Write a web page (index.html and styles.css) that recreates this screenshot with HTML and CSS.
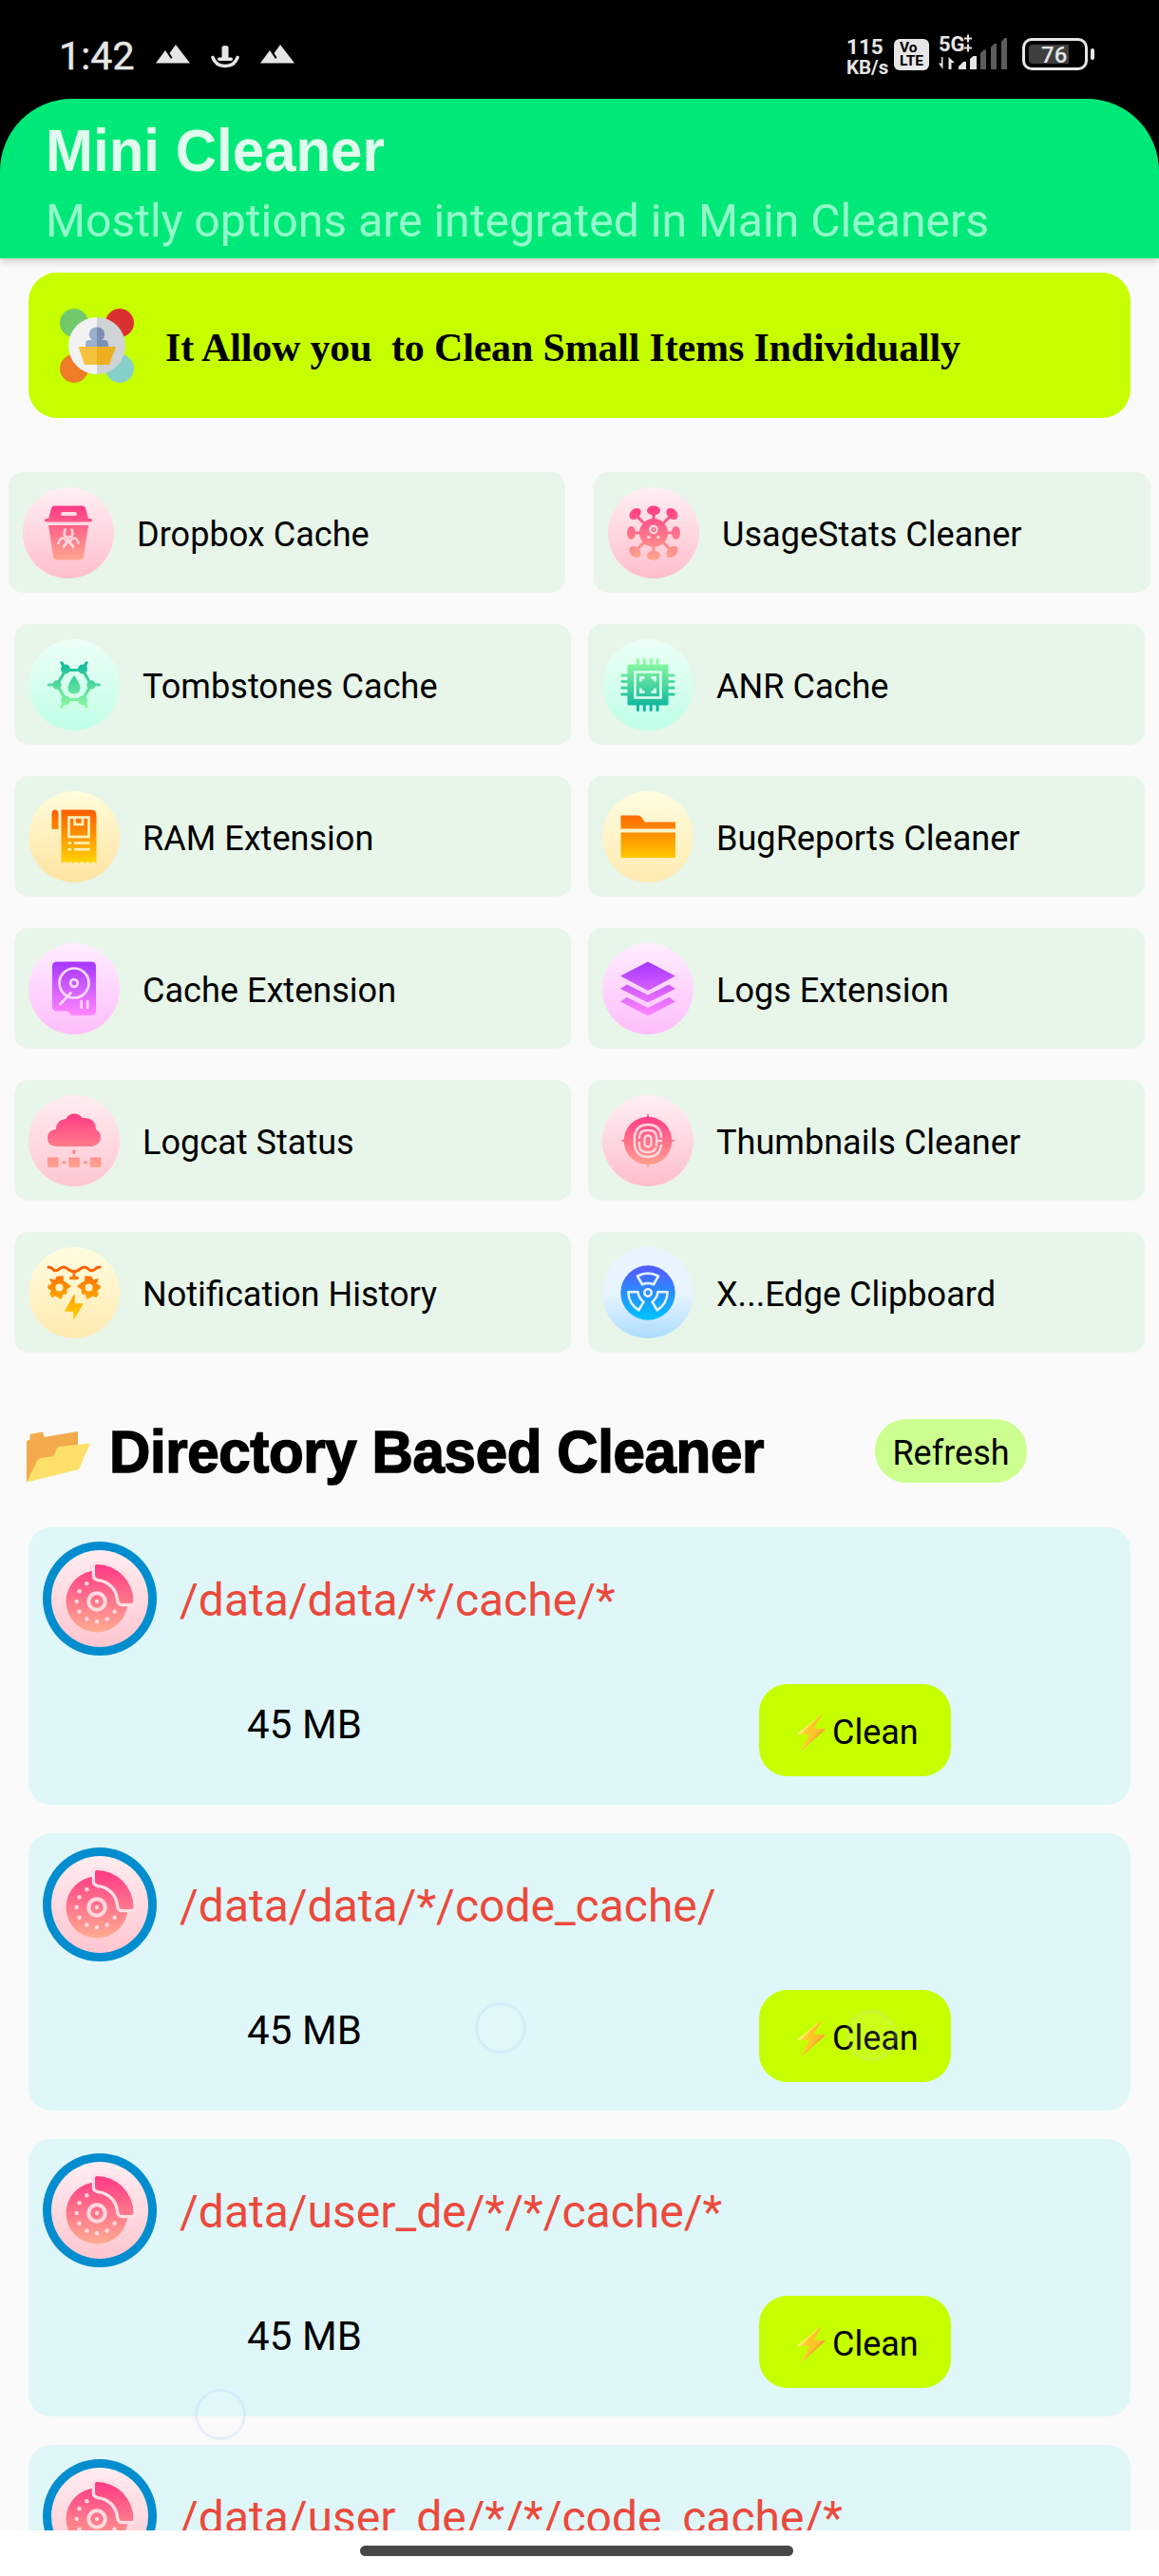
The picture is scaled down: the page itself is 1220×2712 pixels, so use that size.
FILE: index.html
```html
<!DOCTYPE html>
<html lang="en">
<head>
<meta charset="utf-8">
<title>Mini Cleaner</title>
<link rel="stylesheet" href="styles.css">
</head>
<body>
<svg class="defs" width="0" height="0" aria-hidden="true">
  <defs>
    <linearGradient id="bgPink" x1="0" y1="0" x2="0" y2="1"><stop offset="0" stop-color="#fff0f3"/><stop offset="1" stop-color="#ffbecc"/></linearGradient>
    <linearGradient id="bgMint" x1="0" y1="0" x2="0" y2="1"><stop offset="0" stop-color="#edfff6"/><stop offset="1" stop-color="#bfffe6"/></linearGradient>
    <linearGradient id="bgYellow" x1="0" y1="0" x2="0" y2="1"><stop offset="0" stop-color="#fffddb"/><stop offset="1" stop-color="#ffe3a0"/></linearGradient>
    <linearGradient id="bgCream" x1="0" y1="0" x2="0" y2="1"><stop offset="0" stop-color="#fffde0"/><stop offset="1" stop-color="#ffeab0"/></linearGradient>
    <linearGradient id="bgLilac" x1="0" y1="0" x2="0" y2="1"><stop offset="0" stop-color="#ffeeff"/><stop offset="1" stop-color="#ffbdfb"/></linearGradient>
    <linearGradient id="bgBlue" x1="0" y1="0" x2="0" y2="1"><stop offset="0" stop-color="#e8f5ff"/><stop offset=".5" stop-color="#e8f5ff"/><stop offset="1" stop-color="#addcff"/></linearGradient>
    <linearGradient id="fgPink" gradientUnits="userSpaceOnUse" x1="0" y1="20" x2="0" y2="76"><stop offset="0" stop-color="#ff3a85"/><stop offset="1" stop-color="#ffa58f"/></linearGradient>
    <linearGradient id="fgMint" gradientUnits="userSpaceOnUse" x1="0" y1="24" x2="0" y2="73"><stop offset="0" stop-color="#10b79c"/><stop offset="1" stop-color="#92fba0"/></linearGradient>
    <linearGradient id="fgMintUp" gradientUnits="userSpaceOnUse" x1="0" y1="20" x2="0" y2="76"><stop offset="0" stop-color="#98ffa2"/><stop offset=".9" stop-color="#10b79c"/></linearGradient>
    <linearGradient id="fgOrange" gradientUnits="userSpaceOnUse" x1="0" y1="20" x2="0" y2="76"><stop offset="0" stop-color="#fc5c00"/><stop offset="1" stop-color="#ffd500"/></linearGradient>
    <linearGradient id="fgPurple" gradientUnits="userSpaceOnUse" x1="0" y1="20" x2="0" y2="76"><stop offset="0" stop-color="#a637ff"/><stop offset="1" stop-color="#ff86ff"/></linearGradient>
    <linearGradient id="fgBlue" gradientUnits="userSpaceOnUse" x1="0" y1="20" x2="0" y2="74"><stop offset="0" stop-color="#5558ff"/><stop offset="1" stop-color="#00c0ff"/></linearGradient>
    <linearGradient id="fgDisc" gradientUnits="userSpaceOnUse" x1="0" y1="25" x2="0" y2="96"><stop offset="0" stop-color="#ff3a85"/><stop offset="1" stop-color="#ffad91"/></linearGradient>
    <linearGradient id="bolt" x1="0" y1="0" x2="1" y2="0"><stop offset="0" stop-color="#ffe14d"/><stop offset=".4" stop-color="#ffca28"/><stop offset="1" stop-color="#fbb22b"/></linearGradient>
    <linearGradient id="bgPinkDisc" x1="0" y1="0" x2="0" y2="1"><stop offset="0" stop-color="#ffedf0"/><stop offset="1" stop-color="#ffc6d1"/></linearGradient>
    <symbol id="disc" viewBox="0 0 120 120">
      <circle cx="60" cy="60" r="60" fill="#028dce"/>
      <circle cx="60" cy="60" r="51" fill="url(#bgPinkDisc)"/>
      <circle cx="57" cy="63" r="32.500" fill="url(#fgDisc)"/>
      <path d="M55 26q0-2 2-2A39 39 0 0 1 95.500 62q0 3-2 3H83q-2.500 0-3-5A24 24 0 0 0 58 39q-3-1-3-3Z" fill="url(#fgDisc)" stroke="#ffe0e6" stroke-width="6.500"/>
      <path d="M55 26q0-2 2-2A39 39 0 0 1 95.500 62q0 3-2 3H83q-2.500 0-3-5A24 24 0 0 0 58 39q-3-1-3-3Z" fill="url(#fgDisc)"/>
      <circle cx="57" cy="63" r="8.700" fill="none" stroke="#ffd9e0" stroke-width="4"/>
      <g fill="#ffd9e0"><circle cx="57" cy="63" r="2.200"/><circle cx="46.400" cy="44.300" r="2.200"/><circle cx="38.600" cy="52.300" r="2.200"/><circle cx="35.700" cy="63" r="2.200"/><circle cx="38.600" cy="73.700" r="2.200"/><circle cx="46.400" cy="81.500" r="2.200"/><circle cx="57" cy="84.300" r="2.200"/><circle cx="67.700" cy="81.500" r="2.200"/><circle cx="75.600" cy="73.700" r="2.200"/></g>
    </symbol>
    <symbol id="zap" viewBox="0 0 30 40"><path d="M27 0 0 21.500 13 22.500 3 40 30 16.500 17.500 15.500Z" fill="url(#bolt)"/><path d="M27 0 0 21.500l3 .3Z" fill="#fff176"/><path d="M3 40 30 16.500l-3-.3Z" fill="#f4a43a"/></symbol>
    <symbol id="peaks" viewBox="0 0 36 20"><path d="M0 19.500 10 6l6 9 1.500-1.500L14.500 9 21 0l15 19.500Z" fill="#e6e6e6"/></symbol>
  </defs>
</svg>

<div class="screen">
  <div class="statusbar">
    <div class="status-left">
      <span class="clock">1:42</span>
      <svg class="peaks" width="36" height="20"><use href="#peaks"/></svg>
      <svg class="dock" width="30" height="24" viewBox="0 0 30 24"><path d="M11.500 2q0-2 3.500-2t3.500 2v10.500h3q1.500 0 1.500 1.700T21.500 16h-13Q7 16 7 14.200t1.500-1.700h3Z" fill="#e6e6e6"/><path d="M2 12.500Q5 21.500 15 21.500T28 12.500" fill="none" stroke="#e6e6e6" stroke-width="3.600" stroke-linecap="round"/></svg>
      <svg class="peaks" width="36" height="20"><use href="#peaks"/></svg>
    </div>
    <div class="status-right">
      <div class="speed"><span>115</span><span class="unit">KB/s</span></div>
      <div class="volte"><span>Vo</span><span>LTE</span></div>
      <div class="signal">
        <span class="net">5G</span>
        <svg width="73" height="38" viewBox="0 0 73 38"><path d="M27 4.500h8M31 .5v8M27 14.500h8M31 10.500v8" stroke="#e6e6e6" stroke-width="2" fill="none"/><path d="M4.500 24v13L0 30.500h3V24zM10.500 37V24l6.500 6h-3.500v7z" fill="#e6e6e6"/><path d="M21 36.500V34l5-5h3v8h-8ZM33 26l3.500-3H40v14h-7Z" fill="#e6e6e6"/><path d="M44 20l3.500-3.500H50V37h-6ZM55 14l3.500-4H61v27h-6ZM66 8l3.500-4H72v33h-6Z" fill="#5c5c5c"/></svg>
      </div>
      <div class="battery"><div class="cell"><span>76</span></div><i></i></div>
    </div>
  </div>

  <header class="appbar">
    <h1>Mini Cleaner</h1>
    <p>Mostly options are integrated in Main Cleaners</p>
  </header>

  <main class="content">
    <section class="banner">
      <svg width="78" height="78" viewBox="0 0 78 78"><circle cx="15" cy="15" r="15" fill="#71c96b"/><circle cx="63" cy="15" r="15" fill="#db3030"/><circle cx="15" cy="63" r="15" fill="#ef7c28"/><circle cx="63" cy="63" r="15" fill="#87cfc9"/><path d="M39 9a30 30 0 0 0 0 60Z" fill="#f2f2f3"/><path d="M39 9a30 30 0 0 1 0 60Z" fill="#d0d3d4"/><path d="M39 19.500a7.800 7.500 0 0 0-5 13.500h-3q-4 0-4 5v3h12Z" fill="#9cadd0"/><path d="M39 19.500a7.800 7.500 0 0 1 5 13.500h3q4 0 4 5v3H39Z" fill="#7a90b3"/><path d="M19.500 40H39v19H26Z" fill="#f6c13c"/><path d="M39 40h20l-7 19H39Z" fill="#edae20"/></svg>
      <span>It Allow you&nbsp; to Clean Small Items Individually</span>
    </section>

    <section class="tools">
      <div class="row row-wide">
        <div class="tool">
          <svg width="96" height="96" viewBox="0 0 96 96"><circle cx="48" cy="48" r="48" fill="url(#bgPink)"/><path d="M30 22q.7-2.500 3-2.500h30q2.300 0 3 2.500l3 11h2.500q1.500 0 1.500 1.700T71.500 36.500h-47Q23 36.500 23 34.700T24.500 33H27Z" fill="url(#fgPink)"/><path d="M27 40h42l-5 33q-.5 3.500-4 3.500H36q-3.500 0-4-3.500Z" fill="url(#fgPink)"/><path d="M42 28h13" stroke="#ffdce3" stroke-width="4" stroke-linecap="round"/><g fill="none" stroke="#ffd4dd" stroke-width="2.500" stroke-linecap="round"><path d="M44.500 44.500q-3 8 3.500 8t3.500-8M37.500 59q2-7 6.500-5 4 3-1 9M58.500 59q-2-7-6.500-5-4 3 1 9M48 53v4M48 57l-5 5M48 57l5 5"/></g></svg>
          <span>Dropbox Cache</span>
        </div>
        <div class="tool">
          <svg width="96" height="96" viewBox="0 0 96 96"><circle cx="48" cy="48" r="48" fill="url(#bgPink)"/><path d="M48 26v46M24 48h48M31 31l34 34M65 31 31 65" stroke="url(#fgPink)" stroke-width="3"/><g fill="url(#fgPink)"><circle cx="48" cy="48" r="15"/><ellipse cx="48" cy="24.500" rx="7" ry="5"/><ellipse cx="48" cy="72" rx="7" ry="5"/><ellipse cx="24.500" cy="48" rx="4.500" ry="7"/><ellipse cx="71.500" cy="48" rx="4.500" ry="7"/><ellipse cx="28.500" cy="28" rx="5" ry="7" transform="rotate(45 28.500 28)"/><ellipse cx="67.500" cy="28" rx="5" ry="7" transform="rotate(-45 67.500 28)"/><ellipse cx="28.500" cy="68" rx="5" ry="7" transform="rotate(-45 28.500 68)"/><ellipse cx="67.500" cy="68" rx="5" ry="7" transform="rotate(45 67.500 68)"/></g><circle cx="48" cy="44.500" r="3.700" fill="none" stroke="#ffd9e0" stroke-width="2.200"/><g fill="#ffd9e0"><circle cx="48" cy="44.500" r="1"/><circle cx="43" cy="52.500" r="1.700"/><circle cx="53" cy="52.500" r="1.700"/></g></svg>
          <span>UsageStats Cleaner</span>
        </div>
      </div>
      <div class="row">
        <div class="tool">
          <svg width="96" height="96" viewBox="0 0 96 96"><circle cx="48" cy="48" r="48" fill="url(#bgMint)"/><g fill="none" stroke="url(#fgMint)" stroke-width="3.200" stroke-linecap="round"><path d="M39 32.500h18.100L66 48l-9 15.500H39L30 48Z"/><path d="M39 32l-4-7M57 32l4-7M30 48h-8.500M66 48h8.500M39 64l-4 7M57 64l4 7"/></g><g fill="url(#fgMint)"><circle cx="39" cy="31.500" r="5"/><circle cx="57" cy="31.500" r="5"/><circle cx="39" cy="64.500" r="5"/><circle cx="57" cy="64.500" r="5"/><circle cx="30" cy="48" r="4.700"/><circle cx="66" cy="48" r="4.700"/></g><path d="M48 34C35 43 36 61 48 61S61 43 48 34Z" fill="#d5ffee"/><path d="M48 38Q41.500 47 41.500 51q0 6.500 6.500 6.500t6.500-6.500Q54.500 47 48 38Z" fill="url(#fgMint)"/></svg>
          <span>Tombstones Cache</span>
        </div>
        <div class="tool">
          <svg width="96" height="96" viewBox="0 0 96 96"><circle cx="48" cy="48" r="48" fill="url(#bgMint)"/><rect x="26.500" y="26.500" width="43" height="43" rx="1.500" fill="url(#fgMintUp)"/><g fill="url(#fgMintUp)"><rect x="36" y="20" width="3" height="56" rx="1"/><rect x="42.800" y="20" width="3" height="56" rx="1"/><rect x="49.700" y="20" width="3" height="56" rx="1"/><rect x="56.500" y="20" width="3" height="56" rx="1"/><rect x="19.500" y="36.500" width="57" height="3" rx="1"/><rect x="19.500" y="43" width="57" height="3" rx="1"/><rect x="19.500" y="49.700" width="57" height="3" rx="1"/><rect x="19.500" y="56.500" width="57" height="3" rx="1"/></g><g fill="none" stroke="#d6ffee"><rect x="34.500" y="34.500" width="27" height="27" stroke-width="2.600"/><path stroke-width="2.800" d="M44.500 40.500h-4v4M51.500 40.500h4v4M44.500 55.500h-4v-4M51.500 55.500h4v-4"/></g></svg>
          <span>ANR Cache</span>
        </div>
      </div>
      <div class="row">
        <div class="tool">
          <svg width="96" height="96" viewBox="0 0 96 96"><circle cx="48" cy="48" r="48" fill="url(#bgYellow)"/><path d="M34.500 19.500H66q5.500 0 5.500 6V76l-3.100-2.200-3.100 2.200-3-2.200-3.100 2.200-3.100-2.200L53 76l-3.100-2.200-3.100 2.200-3-2.200-3.100 2.200-3.100-2.200-3.100 2.200Z" fill="url(#fgOrange)"/><path d="M24.500 40V24q0-4.500 3.500-4.500t3.500 4.500v16Z" fill="url(#fgOrange)"/><g fill="none" stroke="#fff3c0" stroke-width="2.600"><rect x="42.500" y="27.500" width="21" height="20.500"/><path d="M48.500 28v7h8.500v-7M41.500 54.500h3.500M48 54.500h16.500M41.500 61.300h3.500M48 61.300h16.500"/></g></svg>
          <span>RAM Extension</span>
        </div>
        <div class="tool">
          <svg width="96" height="96" viewBox="0 0 96 96"><circle cx="48" cy="48" r="48" fill="url(#bgCream)"/><path d="M19.500 25.500h18.500q2 0 3.200 2l3.600 5H77v7H19.500ZM19.500 43.500H77V70H19.500Z" fill="url(#fgOrange)"/></svg>
          <span>BugReports Cleaner</span>
        </div>
      </div>
      <div class="row">
        <div class="tool">
          <svg width="96" height="96" viewBox="0 0 96 96"><circle cx="48" cy="48" r="48" fill="url(#bgLilac)"/><path d="M30 19.500h36q5 0 5 5V71q0 5-5 5H46q-1.500 0-3-2.200-1.500-2.300-3-2.300H30q-5 0-5-5V24.500q0-5 5-5Z" fill="url(#fgPurple)"/><g fill="none" stroke="#ffd9fd" stroke-width="2.700" stroke-linecap="round"><circle cx="48" cy="42" r="15.500"/><circle cx="48" cy="42" r="3.800"/><path d="M44.500 52.500 33.500 64M55.700 61v7M62.200 61v7"/></g></svg>
          <span>Cache Extension</span>
        </div>
        <div class="tool">
          <svg width="96" height="96" viewBox="0 0 96 96"><circle cx="48" cy="48" r="48" fill="url(#bgLilac)"/><path d="M48 19.500 77 34.500 48 50 19 34.500ZM19 48l7-4.500L48 54.500l22-11 7 4.500-29 14.500ZM19 61.500l7-4.500L48 68l22-11 7 4.500-29 15Z" fill="url(#fgPurple)"/></svg>
          <span>Logs Extension</span>
        </div>
      </div>
      <div class="row">
        <div class="tool">
          <svg width="96" height="96" viewBox="0 0 96 96"><circle cx="48" cy="48" r="48" fill="url(#bgPinkDisc)"/><path d="M29.500 54Q20 53.500 20 45t9-9q0-10 10.500-11 2.500-5.500 8.500-5.500t8.500 4.500q14-1 14.500 12 5 3 5 9t-8.500 9Z" fill="url(#fgPink)"/><g fill="url(#fgPink)"><path d="M46.500 57.500h3v4.500h-3zM35.500 69.300h4v3h-4zM58 69.300h4v3h-4z"/><rect x="20" y="65.500" width="11.500" height="10.500" rx="1"/><rect x="42.300" y="65.500" width="11.500" height="10.500" rx="1"/><rect x="65" y="65.500" width="11.500" height="10.500" rx="1"/></g></svg>
          <span>Logcat Status</span>
        </div>
        <div class="tool">
          <svg width="96" height="96" viewBox="0 0 96 96"><circle cx="48" cy="48" r="48" fill="url(#bgPink)"/><circle cx="48" cy="48" r="25.300" fill="url(#fgPink)"/><path d="M48 19l2 6h-4ZM48 77l2-6h-4ZM19 48l6-2v4ZM77 48l-6-2v4Z" fill="url(#fgPink)"/><g fill="none" stroke="#ffd7de" stroke-width="2.400"><path d="M62 45v-3q-2-11-14-11T34 43v10q2 12 14 12t14-12v-1"/><path d="M57 48h6M57 54V44q0-7-9-7t-9 7v2M39 49v4q0 7 9 7 7 0 8.500-5"/><rect x="44.500" y="42.500" width="7" height="12" rx="3.500"/></g></svg>
          <span>Thumbnails Cleaner</span>
        </div>
      </div>
      <div class="row">
        <div class="tool">
          <svg width="96" height="96" viewBox="0 0 96 96"><circle cx="48" cy="48" r="48" fill="url(#bgCream)"/><path d="M21 21q3 0 5 2.500t5.500 0Q35 21 37 21t5 2.500q6 4.500 11.500 0Q57 21 59 21t4.500 2.500q3.500 2.500 6 0T75 21M48 25v8M44.500 32.500h7" fill="none" stroke="url(#fgOrange)" stroke-width="3" stroke-linecap="round"/><g fill="url(#fgOrange)" stroke="url(#fgOrange)" stroke-width="1.500" stroke-linejoin="round"><path d="M30 31.500l6-.5v5l3.500 2L44 41l-4.500 3.500v4.500L36 48.500l-2 5.500-6-3.500-3 2L23 49l2-3.500L21 43v-2l4.500-2-2.500-5 5.500 1Z"/><path d="M66 31.500l-6-.5v5l-3.500 2L52 41l4.500 3.500v4.500L60 48.500l2 5.500 6-3.500 3 2L73 49l-2-3.500L75 43v-2l-4.500-2 2.500-5-5.500 1Z"/><path d="M48 51v9h8.500L48 75V67h-9Z"/></g><circle cx="32.500" cy="42.500" r="4" fill="#fff6c8"/><circle cx="63.500" cy="42.500" r="4" fill="#fff6c8"/></svg>
          <span>Notification History</span>
        </div>
        <div class="tool">
          <svg width="96" height="96" viewBox="0 0 96 96"><circle cx="48" cy="48" r="48" fill="url(#bgBlue)"/><circle cx="48" cy="48" r="28.700" fill="url(#fgBlue)"/><g fill="none" stroke="#e3f3ff" stroke-width="2.600" stroke-linejoin="round"><circle cx="48" cy="48" r="3.700"/><path id="blade" d="M37 30.500q11-6 22 0l-5 8.800q-6-2.500-12 0Z"/><use href="#blade" transform="rotate(120 48 48)"/><use href="#blade" transform="rotate(240 48 48)"/></g></svg>
          <span>X...Edge Clipboard</span>
        </div>
      </div>
    </section>

    <section class="heading">
      <svg width="67" height="54" viewBox="0 0 67 54"><path d="M0 53.500V10l3.500-1.500V3L17 .5l1.500 5.500L54 0v16L13 38Z" fill="#f3aa4b"/><path d="M0 53.500 11 31q1.500-2.500 4-3l11-1.500 3-1.500 2.500-7q1-1.500 3-2L67 12.500 55 40Z" fill="#ffe06b"/></svg>
      <h2>Directory Based Cleaner</h2>
      <button class="refresh">Refresh</button>
    </section>

    <section class="dirs">
      <article class="dir">
        <div class="dir-top"><svg width="120" height="120"><use href="#disc"/></svg><span class="path">/data/data/*/cache/*</span></div>
        <div class="dir-bottom"><span class="size">45 MB</span><button class="clean"><svg width="30" height="40"><use href="#zap"/></svg><span>Clean</span></button></div>
      </article>
      <article class="dir">
        <div class="dir-top"><svg width="120" height="120"><use href="#disc"/></svg><span class="path">/data/data/*/code_cache/</span></div>
        <div class="dir-bottom"><span class="size">45 MB</span><button class="clean"><svg width="30" height="40"><use href="#zap"/></svg><span>Clean</span></button></div>
      </article>
      <article class="dir">
        <div class="dir-top"><svg width="120" height="120"><use href="#disc"/></svg><span class="path">/data/user_de/*/*/cache/*</span></div>
        <div class="dir-bottom"><span class="size">45 MB</span><button class="clean"><svg width="30" height="40"><use href="#zap"/></svg><span>Clean</span></button></div>
      </article>
      <article class="dir">
        <div class="dir-top"><svg width="120" height="120"><use href="#disc"/></svg><span class="path">/data/user_de/*/*/code_cache/*</span></div>
      </article>
    </section>
  </main>

  <footer class="navbar"><div class="handle"></div></footer>

  <i class="bubble bubble-a"></i>
  <i class="bubble bubble-b"></i>
  <i class="bubble bubble-c"></i>
</div>
</body>
</html>
```

FILE: styles.css
```css
* { box-sizing: border-box; }
body { margin: 0; background: #000; font-family: Roboto, sans-serif; color: #000; }
h1, h2, p { margin: 0; white-space: nowrap; }
svg { display: block; flex: none; }
button { border: 0; padding: 0; font: inherit; color: inherit; }
.defs { position: absolute; }

.screen { position: relative; width: 1220px; height: 2712px; overflow: hidden; background: #000; display: flex; flex-direction: column; }

.statusbar { height: 104px; flex: none; display: flex; justify-content: space-between; color: #e6e6e6; padding: 0 68px 0 62px; }
.status-left { display: flex; align-items: flex-start; }
.clock { font-size: 41px; line-height: 48px; font-weight: 400; margin-top: 35px; width: 102px; letter-spacing: .2px; -webkit-text-stroke: .5px #e6e6e6; }
.peaks { margin-top: 47px; }
.dock { margin: 48px 22px 0 22px; }
.status-right { display: flex; align-items: flex-start; font-weight: 700; }
.speed { margin-top: 38px; width: 50px; display: flex; flex-direction: column; font-size: 22.500px; line-height: 22px; }
.unit { font-size: 20.500px; }
.volte { width: 37px; height: 33px; margin-top: 41px; border-radius: 6px; background: #e6e6e6; color: #000; display: flex; flex-direction: column; font-size: 15.500px; line-height: 13.500px; padding: 3px 0 0 6px; }
.signal { width: 73px; height: 38px; margin: 36px 0 0 10px; display: grid; }
.signal > * { grid-area: 1 / 1; }
.net { font-size: 22px; line-height: 22px; }
.battery { display: flex; align-items: center; gap: 3px; margin: 40px 0 0 15px; height: 34px; }
.cell { width: 69px; height: 34px; border: 3px solid #e6e6e6; border-radius: 10px; padding: 4px; display: flex; }
.cell span { font-size: 24px; line-height: 23px; font-weight: 500; width: 42px; height: 20px; background: #3f3f3f; border-radius: 4px 0 0 4px; padding-left: 13px; }
.battery i { width: 4px; height: 12px; border-radius: 2px; background: #e6e6e6; }

.appbar { height: 168px; flex: none; background: #00e978; border-radius: 76px 76px 0 0; padding: 20px 48px 0; position: relative; z-index: 1; box-shadow: 0 3px 8px rgba(0,0,0,.2); }
.appbar h1 { font: 700 60px/70px "Liberation Sans", Arial, sans-serif; transform: scaleY(1.05); color: #dffcee; }
.appbar p { font-size: 48.100px; line-height: 56px; color: #94facb; margin-top: 11px; }

.content { height: 2392px; flex: none; overflow: hidden; background: #fafafa; padding-top: 15px; }
.banner { height: 153px; margin: 0 30px; border-radius: 30px; background: #c6ff00; display: flex; align-items: center; gap: 33px; padding: 0 33px; }
.banner span { font: 700 42px/48px "Liberation Serif", "Times New Roman", serif; letter-spacing: -.17px; padding-top: 4px; }

.tools { margin-top: 57px; display: flex; flex-direction: column; gap: 33px; }
.row { display: flex; gap: 18px; padding: 0 15px; }
.row-wide { gap: 30px; padding: 0 9px; }
.tool { flex: 1; height: 127px; border-radius: 15px; background: #e8f5e9; display: flex; align-items: center; padding-left: 15px; gap: 24px; font-size: 36.100px; }
.tool span { padding-top: 4px; }

.heading { margin-top: 70px; height: 67px; padding-left: 28px; display: flex; align-items: center; }
.heading svg { margin-top: 12px; }
.heading h2 { font: 700 60px/72px "Liberation Sans", Arial, sans-serif; letter-spacing: -.35px; transform: scaleY(1.06); -webkit-text-stroke: 1.500px #000; margin-left: 20px; width: 806px; padding-top: 2px; }
.refresh { width: 160px; height: 67px; border-radius: 33px; background: #ccff90; font-size: 36px; padding-top: 4px; }

.dirs { margin: 47px 30px 0; display: flex; flex-direction: column; gap: 30px; }
.dir { height: 292px; border-radius: 24px; background: #dff7f9; padding: 15px; }
.dir-top { display: flex; align-items: center; gap: 24px; height: 120px; }
.path { font-size: 48px; line-height: 56px; color: #ec493c; padding-top: 4px; }
.dir-bottom { display: flex; align-items: flex-start; padding: 30px 0 0 215px; }
.size { font-size: 42px; line-height: 48px; width: 539px; margin-top: 19px; letter-spacing: .1px; }
.clean { width: 202px; height: 97px; border-radius: 30px; background: #c6ff00; display: flex; align-items: center; padding: 4px 0 0 40px; gap: 7px; font-size: 36px; }

.navbar { height: 48px; flex: none; background: #fff; display: flex; justify-content: center; padding: 16px 14px 0 7px; }
.handle { width: 456px; height: 11px; border-radius: 6px; background: #474747; }

.bubble { position: absolute; z-index: 2; width: 54px; height: 54px; border-radius: 50%; border: 3px solid rgba(190,210,255,.32); background: rgba(255,255,255,.1); }
.bubble-a { left: 500px; top: 2108px; }
.bubble-b { left: 205px; top: 2515px; }
.bubble-c { left: 890px; top: 2116px; border-color: rgba(180,190,200,.16); }
```
